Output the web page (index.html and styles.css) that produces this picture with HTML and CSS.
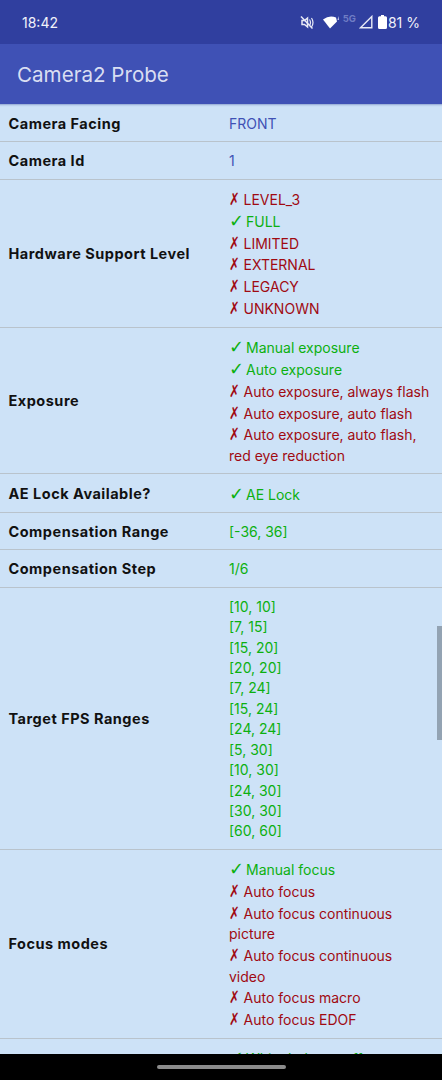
FILE: index.html
```html
<!DOCTYPE html>
<html lang="en">
<head>
    <meta charset="UTF-8">
    <meta name="viewport" content="width=device-width, initial-scale=1.0">
    <title>Camera2 Probe</title>
    <link rel="stylesheet" href="styles.css">
</head>
<body>
<div class="screen">
    <div class="status-bar">
        <span class="clock">18:42</span>
        <div class="status-icons">
            <svg class="icon-mute" width="15" height="15" viewBox="0 0 15 15">
                <path d="M3 5.5h2.5L8.5 3v9L5.5 9.500H3z" fill="none" stroke="#e8eaf6" stroke-width="1.500"/>
                <path d="M10.500 4.500q2 3 0 6M12.500 3q3 4.500 0 9" fill="none" stroke="#e8eaf6" stroke-width="1.200"/>
                <path d="M2 1.500l11.500 12" stroke="#e8eaf6" stroke-width="1.500"/>
            </svg>
            <svg class="icon-wifi" width="19" height="14" viewBox="0 0 19 14">
                <path d="M0 4.500Q6.500 -0.500 13 2.500L14 6.500 7 13.500z" fill="#fff"/>
                <path d="M15.500 1l-1 4h1.500z" fill="#c5cae9"/>
            </svg>
            <span class="net-type">5G</span>
            <svg class="icon-signal" width="14" height="14" viewBox="0 0 14 14">
                <path d="M1.500 12.800L12.800 1.500V12.800z" fill="none" stroke="#e8eaf6" stroke-width="1.400"/>
            </svg>
            <svg class="icon-battery" width="9" height="14" viewBox="0 0 9 14">
                <path d="M3 0h3v1.300h1.500q1.500 0 1.500 1.500V12.500Q9 14 7.500 14h-6Q0 14 0 12.500V2.800q0-1.500 1.500-1.500H3z" fill="#fff"/>
            </svg>
            <span class="battery-text">81 %</span>
        </div>
    </div>
    <div class="toolbar">Camera2 Probe</div>

    <div class="content">
        <div class="row">
            <div class="label">Camera Facing</div>
            <div class="value plain">FRONT</div>
        </div>
        <div class="row">
            <div class="label">Camera Id</div>
            <div class="value plain">1</div>
        </div>
        <div class="row">
            <div class="label">Hardware Support Level</div>
            <div class="value">
                <div class="no"><span class="mark">✗</span>LEVEL_3</div>
                <div class="yes"><span class="mark">✓</span>FULL</div>
                <div class="no"><span class="mark">✗</span>LIMITED</div>
                <div class="no"><span class="mark">✗</span>EXTERNAL</div>
                <div class="no"><span class="mark">✗</span>LEGACY</div>
                <div class="no"><span class="mark">✗</span>UNKNOWN</div>
            </div>
        </div>
        <div class="row">
            <div class="label">Exposure</div>
            <div class="value">
                <div class="yes"><span class="mark">✓</span>Manual exposure</div>
                <div class="yes"><span class="mark">✓</span>Auto exposure</div>
                <div class="no"><span class="mark">✗</span>Auto exposure, always flash</div>
                <div class="no"><span class="mark">✗</span>Auto exposure, auto flash</div>
                <div class="no"><span class="mark">✗</span>Auto exposure, auto flash,<br>red eye reduction</div>
            </div>
        </div>
        <div class="row">
            <div class="label">AE Lock Available?</div>
            <div class="value">
                <div class="yes"><span class="mark">✓</span>AE Lock</div>
            </div>
        </div>
        <div class="row">
            <div class="label">Compensation Range</div>
            <div class="value yes">[-36, 36]</div>
        </div>
        <div class="row">
            <div class="label">Compensation Step</div>
            <div class="value yes">1/6</div>
        </div>
        <div class="row">
            <div class="label">Target FPS Ranges</div>
            <div class="value yes">
                [10, 10]<br>[7, 15]<br>[15, 20]<br>[20, 20]<br>[7, 24]<br>[15, 24]<br>[24, 24]<br>[5, 30]<br>[10, 30]<br>[24, 30]<br>[30, 30]<br>[60, 60]
            </div>
        </div>
        <div class="row">
            <div class="label">Focus modes</div>
            <div class="value">
                <div class="yes"><span class="mark">✓</span>Manual focus</div>
                <div class="no"><span class="mark">✗</span>Auto focus</div>
                <div class="no"><span class="mark">✗</span>Auto focus continuous<br>picture</div>
                <div class="no"><span class="mark">✗</span>Auto focus continuous<br>video</div>
                <div class="no"><span class="mark">✗</span>Auto focus macro</div>
                <div class="no"><span class="mark">✗</span>Auto focus EDOF</div>
            </div>
        </div>
        <div class="row">
            <div class="label"></div>
            <div class="value">
                <div class="yes"><span class="mark">✓</span>White balance off</div>
            </div>
        </div>
        <div class="scroll-thumb"></div>
    </div>

    <div class="nav-bar"><div class="home-pill"></div></div>
</div>
</body>
</html>
```
FILE: styles.css
```css
body {
    margin: 0;
    font-family: Inter, "Liberation Sans", sans-serif;
}

.screen {
    display: flex;
    flex-direction: column;
    height: 1080px;
    overflow: hidden;
    background-color: #cde2f7;
}

.status-bar {
    flex: none;
    display: flex;
    align-items: center;
    justify-content: space-between;
    height: 44px;
    padding: 0 22px;
    background-color: #303f9f;
    color: #f1f2fa;
    font-size: 14px;
}

.status-icons {
    display: flex;
    align-items: center;
}

.icon-mute {
    margin-right: 9px;
}

.net-type {
    margin: -7px 3px 0 1px;
    font-size: 9.500px;
    font-weight: 700;
    color: #6f7cc4;
}

.icon-signal {
    margin-right: 5px;
}

.battery-text {
    margin-left: 1px;
    font-size: 14px;
}

.toolbar {
    flex: none;
    height: 60px;
    line-height: 62px;
    padding-left: 17px;
    background-color: #3f51b5;
    color: #d9def2;
    font-size: 20.600px;
}

.content {
    position: relative;
    flex: 1;
    min-height: 0;
    padding-top: 0.700px;
    overflow: hidden;
    box-shadow: inset 0 3px 2px -2px #8fa3d0;
}

.row {
    display: flex;
    align-items: center;
    padding: 9px 0 7px;
    border-bottom: 1px solid #b9c3cc;
    font-size: 14px;
    line-height: 20.4px;
}

.label {
    flex: none;
    width: 229px;
    padding-left: 8.500px;
    box-sizing: border-box;
    font-size: 14.500px;
    letter-spacing: 0.5px;
    font-weight: 700;
    color: #111;
}

.value {
    flex: 1;
}

/* the tick lines sit a bit taller than plain text lines */
.value > div {
    padding-top: 1.450px;
}

.mark {
    display: inline-block;
    line-height: 0;
    font-family: "DejaVu Sans", sans-serif;
}

.yes .mark {
    width: 17px;
    font-size: 18px;
}

.no .mark {
    width: 14.500px;
    font-size: 17px;
    font-weight: 700;
    transform: scaleX(0.75);
    transform-origin: left;
}

.plain {
    color: #3f51b5;
}

.yes {
    color: #0cb010;
}

.no {
    color: #a00a12;
}

.scroll-thumb {
    position: absolute;
    top: 522px;
    right: 0;
    width: 5px;
    height: 114px;
    background-color: #93a3b3;
}

.nav-bar {
    flex: none;
    display: flex;
    align-items: center;
    justify-content: center;
    height: 26px;
    background-color: #000;
}

.home-pill {
    width: 129px;
    height: 4px;
    border-radius: 2px;
    background-color: #8c8c8c;
}
```
